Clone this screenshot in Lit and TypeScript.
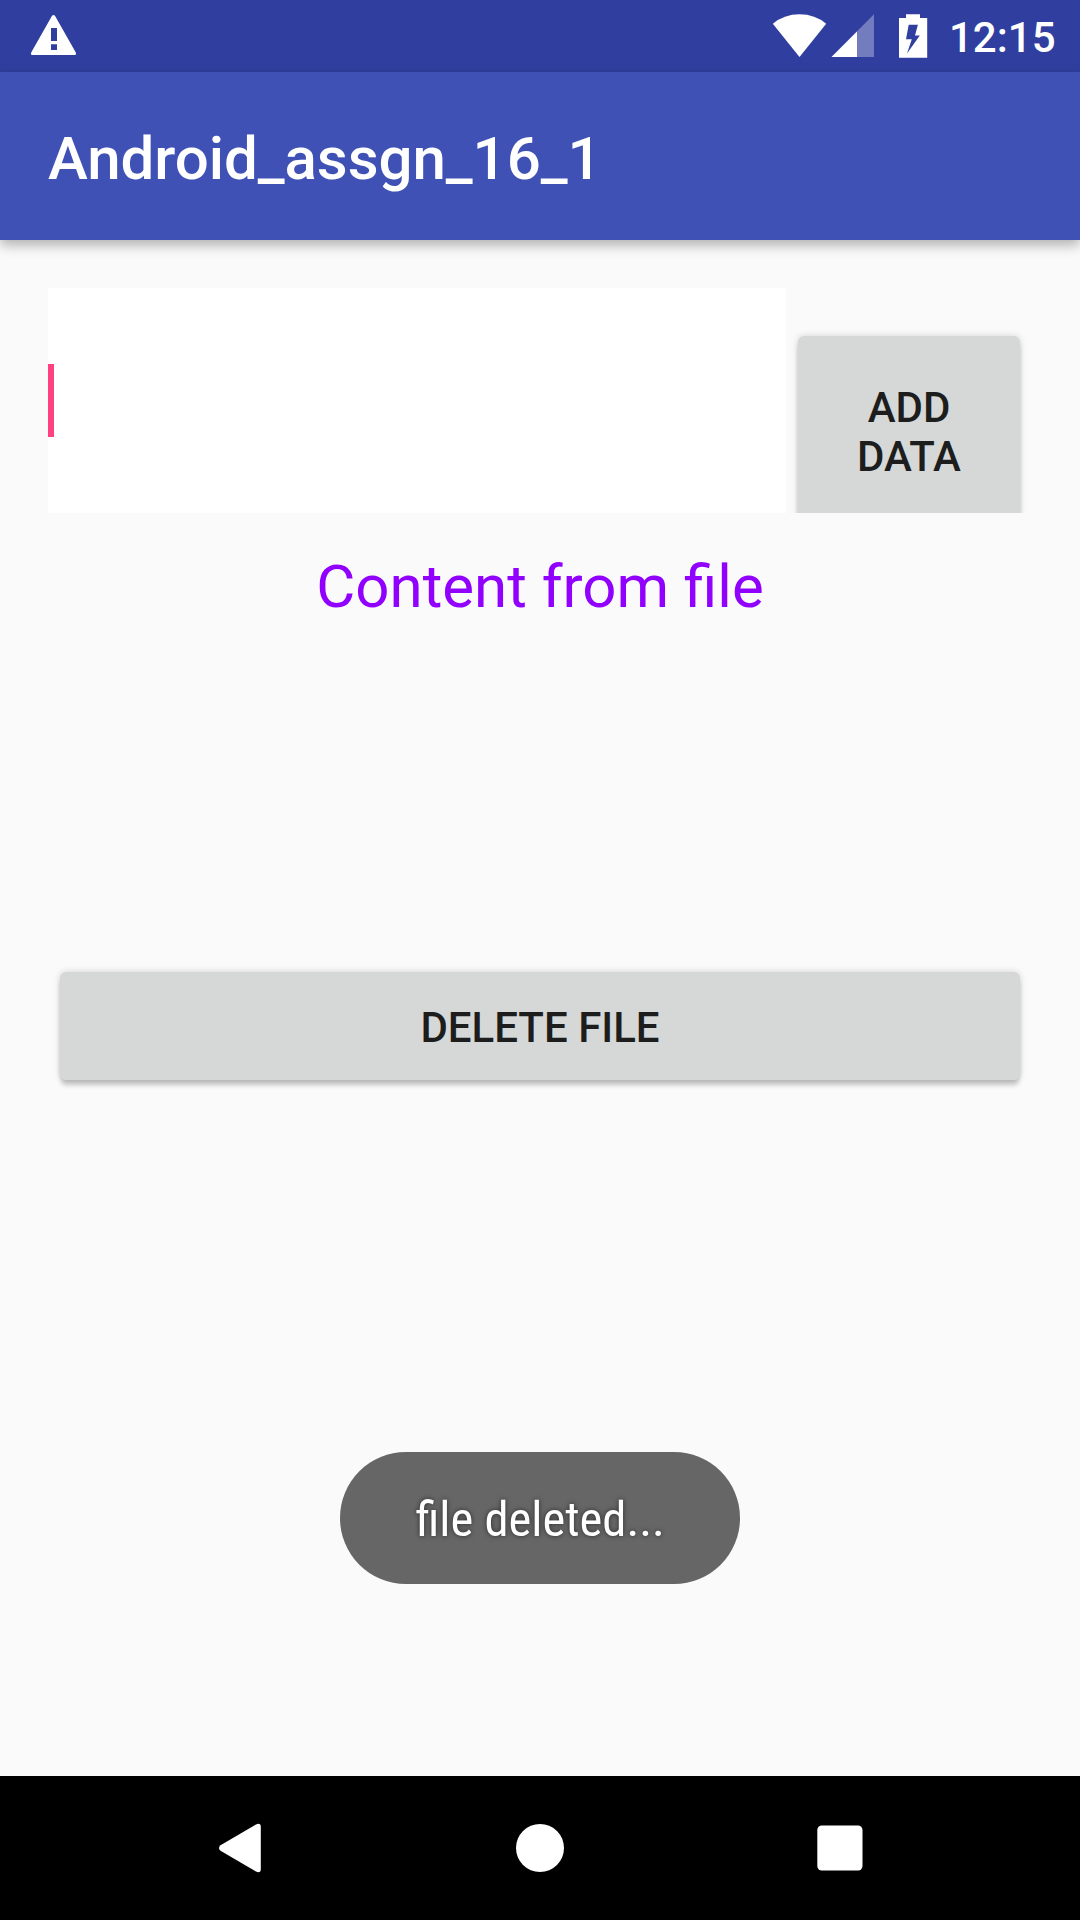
import { LitElement, html, css } from "lit";
import { customElement, property } from "lit/decorators.js";

@customElement("status-bar")
class StatusBar extends LitElement {
  @property() time = "";

  static styles = css`
    :host {
      display: flex;
      justify-content: space-between;
      align-items: center;
      height: 72px;
      background: #303f9f;
      color: #fff;
    }
    svg { display: block; }
    .right { display: flex; align-items: center; padding-right: 25px; }
    .clock {
      width: 106px;
      font: 500 42px/50px Roboto, sans-serif;
      white-space: nowrap;
      padding-top: 4px;
    }
  `;

  render() {
    return html`
      <svg width="100" height="72" viewBox="0 0 100 72" fill="#fff">
        <path fill-rule="evenodd" d="M51.9 16Q53.5 13.9 55.1 16L75.8 52.4Q76.6 55 74.4 55H32.6Q30.4 55 31.2 52.4ZM51 28V41H57V28ZM51 44.3V50H57V44.3Z" />
      </svg>
      <div class="right">
        <svg width="180" height="72" viewBox="769 0 180 72" fill="#fff">
          <path d="M772.8 23.8Q784 14.3 799.5 14.3T826.2 23.8L799.5 57Z" />
          <path d="M831.5 57L874 14.3V57Z" opacity=".32" />
          <path d="M831.5 57L857 31.4V57Z" />
          <path fill-rule="evenodd" d="M906 14.2H920V18H927.2V57.8H899V18H906ZM908.7 24.7L906 39.3H911.8L907 53.5L919.8 35.5H915L917.9 24.7Z" />
        </svg>
        <div class="clock">${this.time}</div>
      </div>
    `;
  }
}

@customElement("raised-button")
class RaisedButton extends LitElement {
  static styles = css`
    :host { display: block; }
    .button {
      display: block;
      box-sizing: border-box;
      width: 100%;
      height: 100%;
      margin: 0;
      padding: var(--button-padding, 2px 0 0);
      border: 0;
      border-radius: 6px;
      background: #d6d8d7;
      box-shadow: 0 6px 5px -1px rgba(0, 0, 0, 0.2), 0 0 7px rgba(0, 0, 0, 0.16);
      color: #1d1d1d;
      font: 500 42px/49px Roboto, sans-serif;
      text-align: center;
      text-transform: uppercase;
    }
  `;

  render() {
    return html`<button class="button"><slot></slot></button>`;
  }
}

@customElement("nav-bar")
class NavBar extends LitElement {
  static styles = css`
    :host {
      display: flex;
      justify-content: center;
      align-items: center;
      height: 144px;
      background: #000;
    }
    .key { display: flex; justify-content: center; width: 300px; }
  `;

  render() {
    return html`
      <div class="key">
        <svg width="60" height="60" viewBox="210 1818 60 60" fill="#fff">
          <path d="M220.5 1845.2L256 1824.4Q260.8 1822.4 260.8 1827V1869Q260.8 1873.6 256 1871.6L220.5 1850.8Q217.5 1848 220.5 1845.2Z" />
        </svg>
      </div>
      <div class="key">
        <svg width="60" height="60" viewBox="0 0 60 60" fill="#fff"><circle cx="30" cy="30" r="24" /></svg>
      </div>
      <div class="key">
        <svg width="60" height="60" viewBox="0 0 60 60" fill="#fff"><rect x="7.3" y="7.4" width="45.2" height="45.2" rx="4.5" /></svg>
      </div>
    `;
  }
}

@customElement("app-root")
class AppRoot extends LitElement {
  static styles = css`
    :host {
      display: flex;
      flex-direction: column;
      position: relative;
      width: 1080px;
      height: 1920px;
      overflow: hidden;
      background: #fafafa;
      font-family: Roboto, sans-serif;
    }
    .appbar {
      flex: none;
      display: flex;
      align-items: center;
      box-sizing: border-box;
      height: 168px;
      padding: 6px 48px 0;
      background: #3f51b5;
      box-shadow: 0 5px 12px rgba(0, 0, 0, 0.3);
      color: #fff;
    }
    .title { margin: 0; font-size: 60px; line-height: 70px; font-weight: 500; letter-spacing: -0.05px; }
    .content { flex: 1; padding: 48px 48px 0; }
    .entry { display: flex; height: 225px; overflow: hidden; }
    .field {
      display: flex;
      align-items: center;
      width: 738px;
      background: #fff;
    }
    .caret { width: 6px; height: 73px; background: #ff4081; }
    .add {
      width: 222px;
      height: 220px;
      margin: 48px 0 0 12px;
      --button-padding: 0 50px 28px;
    }
    .label {
      margin: 39px 0 0;
      font-size: 60px;
      line-height: 70px;
      color: #9100ff;
      text-align: center;
    }
    .delete { height: 108px; margin: 350px 12px 0; }
    .toast {
      position: absolute;
      left: 340px;
      top: 1452px;
      display: flex;
      justify-content: center;
      align-items: center;
      box-sizing: border-box;
      width: 400px;
      height: 132px;
      padding-top: 4px;
      border-radius: 66px;
      background: #666;
      color: #fff;
      font: 400 48px/56px "Roboto Condensed", Roboto, sans-serif;
      font-stretch: 75%;
      text-shadow: 0 0 5px rgba(0, 0, 0, 0.6);
    }
    /* Scaled rather than letter-spaced so that the fi ligature is kept. */
    .message { display: block; transform: scaleX(1.012); }
  `;

  render() {
    return html`
      <status-bar time="12:15"></status-bar>
      <header class="appbar"><h1 class="title">Android_assgn_16_1</h1></header>
      <main class="content">
        <div class="entry">
          <div class="field"><div class="caret"></div></div>
          <raised-button class="add">Add Data</raised-button>
        </div>
        <p class="label">Content from file</p>
        <raised-button class="delete">Delete file</raised-button>
      </main>
      <nav-bar></nav-bar>
      <div class="toast" role="status"><span class="message">file deleted...</span></div>
    `;
  }
}
